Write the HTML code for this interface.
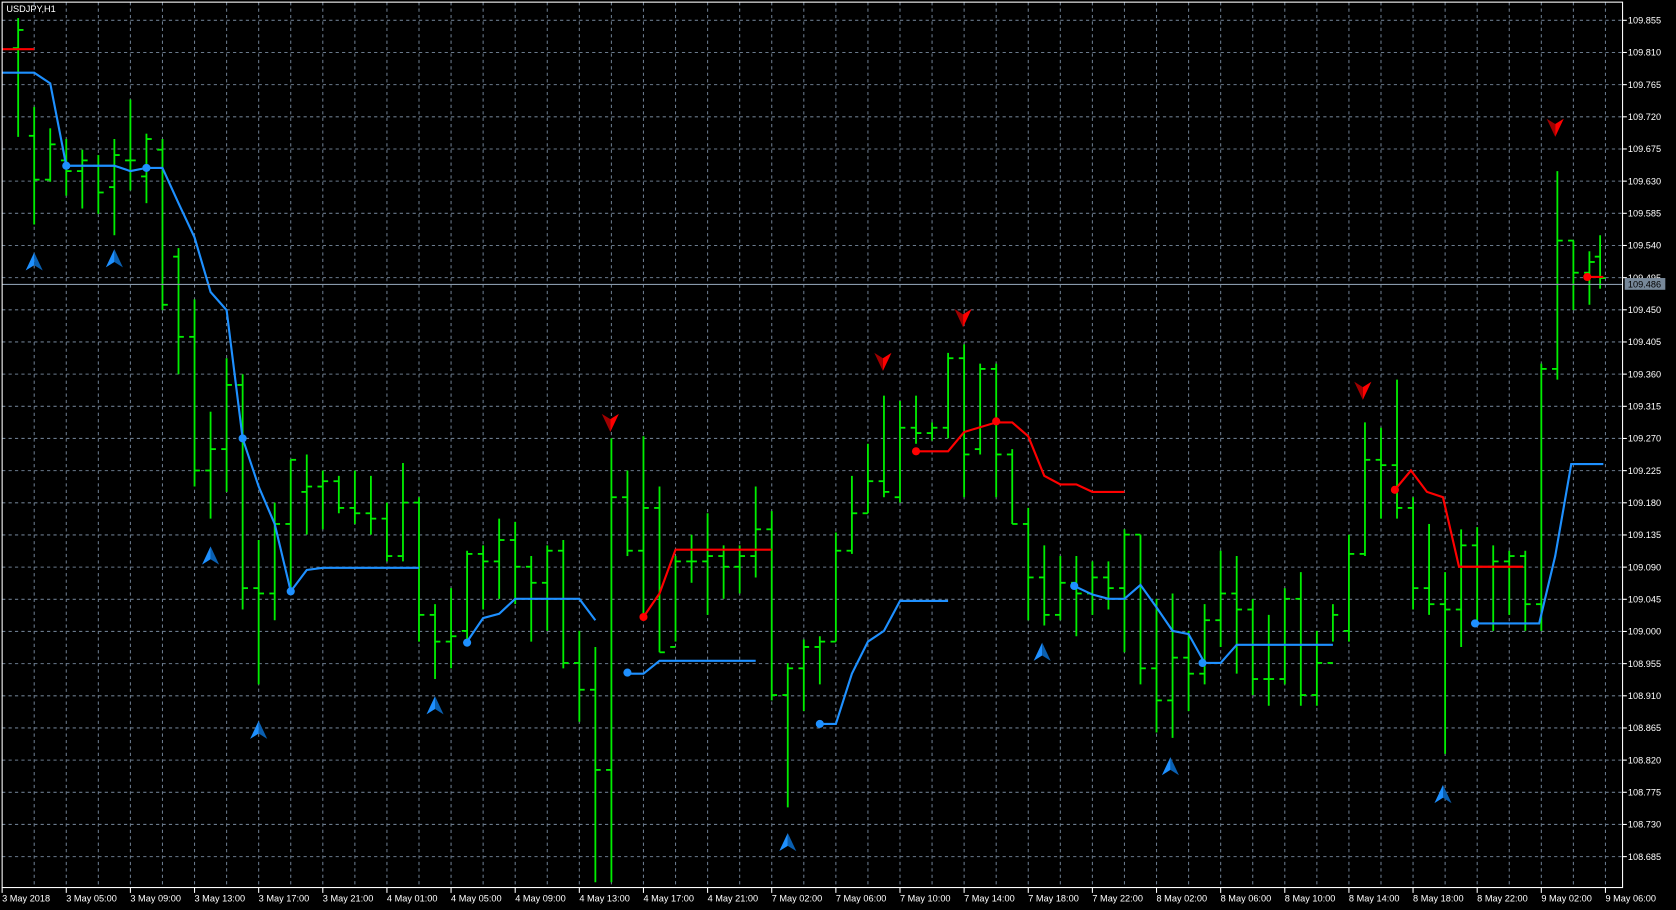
<!DOCTYPE html>
<html><head><meta charset="utf-8"><style>
html,body{margin:0;padding:0;background:#000;overflow:hidden}
svg{display:block}
text{font-family:"Liberation Sans","DejaVu Sans",sans-serif;font-size:8.6px;fill:#fff}
</style></head><body>
<svg id="s" width="1676" height="910" viewBox="0 0 1568 851" preserveAspectRatio="none" xmlns="http://www.w3.org/2000/svg">
<rect width="1568" height="851" fill="#000"/>
<g id="g"></g>
</svg>
<script>
var o='';
// grid
for(var k=0;k<27;k++){var y=19+k*30.08;o+='<line x1="2" x2="1518" y1="'+y+'" y2="'+y+'" stroke="#6a7a8c" stroke-width="1" stroke-dasharray="3,3"/>';
var p=(109.855-k*0.045).toFixed(3);o+='<line x1="1518" x2="1522" y1="'+y+'" y2="'+y+'" stroke="#fff"/><text x="1523" y="'+(y+3)+'">'+p+'</text>';}
for(var x=32;x<1518;x+=30){o+='<line x1="'+x+'" x2="'+x+'" y1="2" y2="830" stroke="#6a7a8c" stroke-width="1" stroke-dasharray="3,3"/>';}
var L=["3 May 2018","3 May 05:00","3 May 09:00","3 May 13:00","3 May 17:00","3 May 21:00","4 May 01:00","4 May 05:00","4 May 09:00","4 May 13:00","4 May 17:00","4 May 21:00","7 May 02:00","7 May 06:00","7 May 10:00","7 May 14:00","7 May 18:00","7 May 22:00","8 May 02:00","8 May 06:00","8 May 10:00","8 May 14:00","8 May 18:00","8 May 22:00","9 May 02:00","9 May 06:00"];
for(var i=0;i<L.length;i++){var x=2+60*i;o+='<line x1="'+x+'" x2="'+x+'" y1="830" y2="835" stroke="#fff"/><text x="'+x+'" y="843">'+L[i]+'</text>';}
// bars x,H,L,O,C
var B=[[17,17,128,45,28],[32,100,210,127,168],[47,120,170,168,135],[62,130,183,150,160],[77,140,195,160,150],[92,145,200,155,180],[107,130,220,175,145],[122,93,178,150,150],[137,125,190,165,130],[152,130,290,140,285],[167,232,350,240,315],[182,280,455,315,440],[197,385,485,440,420],[212,335,460,420,360],[227,350,570,360,550],[242,505,640,550,555],[257,470,580,555,490],[272,430,555,490,430],[287,425,500,460,455],[302,440,495,455,450],[317,445,480,450,475],[332,440,490,475,480],[347,445,500,480,485],[362,470,525,485,520],[377,433,525,520,470],[392,465,600,470,575],[407,565,635,575,600],[422,550,625,600,595],[437,515,600,590,518],[452,510,570,518,525],[467,485,560,525,505],[482,488,565,505,530],[497,520,600,530,545],[512,510,590,545,515],[527,505,625,515,620],[542,590,675,620,645],[557,605,825,645,720],[572,410,825,720,465],[587,440,520,465,515],[602,408,575,515,475],[617,455,610,475,610],[632,520,600,605,525],[647,500,545,525,525],[662,480,575,525,520],[677,510,560,520,530],[692,510,555,530,520],[707,455,540,520,495],[722,478,655,495,650],[737,620,755,650,625],[752,598,665,625,605],[767,595,640,605,600],[782,498,600,600,515],[797,445,518,515,480],[812,415,480,480,450],[827,370,465,450,460],[842,375,470,465,400],[857,370,415,400,405],[872,395,412,405,400],[887,330,410,400,335],[902,322,465,335,425],[917,340,425,420,345],[932,340,465,345,425],[947,420,490,425,490],[962,475,580,490,540],[977,510,585,540,575],[992,520,580,575,545],[1007,520,595,545,555],[1022,525,575,555,540],[1037,525,570,540,550],[1052,495,610,550,500],[1067,500,640,500,625],[1082,560,685,625,655],[1097,555,690,655,615],[1112,590,665,615,630],[1127,565,640,630,580],[1142,515,605,580,555],[1157,520,630,555,570],[1172,560,650,570,635],[1187,575,660,635,635],[1202,550,640,635,560],[1217,535,660,560,650],[1232,590,660,650,620],[1247,565,600,620,575],[1262,500,600,590,518],[1277,395,520,518,430],[1292,400,485,430,435],[1307,355,485,435,475],[1322,465,570,475,550],[1337,490,575,550,565],[1352,535,705,565,570],[1367,495,605,570,510],[1382,493,580,510,530],[1397,510,590,530,525],[1412,515,575,525,520],[1427,515,590,520,565],[1442,340,590,565,345],[1457,160,355,345,225],[1472,225,290,225,255],[1487,235,285,255,245],[1497,220,270,240,260]];
B.forEach(function(b){o+='<g stroke="#00ee00" stroke-width="1.7"><line x1="'+b[0]+'" x2="'+b[0]+'" y1="'+b[1]+'" y2="'+b[2]+'"/><line x1="'+(b[0]-5)+'" x2="'+b[0]+'" y1="'+b[3]+'" y2="'+b[3]+'"/><line x1="'+b[0]+'" x2="'+(b[0]+5)+'" y1="'+b[4]+'" y2="'+b[4]+'"/></g>';});
function pl(pts,c){o+='<polyline fill="none" stroke="'+c+'" stroke-width="2" points="'+pts+'"/>';}
var BL="#1e90ff",RD="#ff0000";
pl("2,68 32,68 47,78 62,155 107,155 122,160 137,157 152,157 167,190 182,222 197,273 212,290 227,410 242,455 257,490 272,553 287,533 302,531 392,531",BL);
pl("437,600 452,578 467,574 482,560 542,560 557,580",BL);
pl("587,630 602,630 617,618 707,618",BL);
pl("767,677 782,677 797,630 812,600 827,590 842,562 887,562",BL);
pl("1005,548 1022,556 1037,560 1052,560 1067,547 1082,568 1097,590 1112,593 1127,620 1142,620 1157,603 1247,603",BL);
pl("1380,583 1440,583 1455,520 1470,434 1500,434",BL);
pl("2,46 32,46",RD);
pl("602,577 617,555 632,514 722,514",RD);
pl("857,422 887,422 902,404 932,395 947,395 962,408 977,445 992,453 1007,453 1022,460 1052,460",RD);
pl("1305,458 1320,440 1335,460 1350,465 1365,530 1425,530",RD);
pl("1485,259 1500,259",RD);
[[62,155],[137,157],[227,410],[272,553],[437,601],[587,629],[767,677],[1005,548],[1125,620],[1380,583]].forEach(function(d){o+='<circle cx="'+d[0]+'" cy="'+d[1]+'" r="3.8" fill="'+BL+'"/>';});
[[602,577],[857,422],[932,394],[1305,458],[1485,259]].forEach(function(d){o+='<circle cx="'+d[0]+'" cy="'+d[1]+'" r="3.8" fill="'+RD+'"/>';});
[[32,245],[107,242],[197,520],[242,683],[407,660],[737,788],[975,610],[1095,717],[1350,743]].forEach(function(a){var x=a[0],y=a[1];o+='<polygon points="'+x+','+(y-9)+' '+(x+8)+','+(y+8)+' '+x+','+(y+3)+'" fill="#0a5fb0"/><polygon points="'+x+','+(y-9)+' '+(x-8)+','+(y+8)+' '+x+','+(y+3)+'" fill="'+BL+'"/>';});
[[571,395],[826,338],[901,297],[1275,365],[1455,119]].forEach(function(a){var x=a[0],y=a[1];o+='<polygon points="'+x+','+(y+9)+' '+(x-8)+','+(y-8)+' '+x+','+(y-3)+'" fill="#a00000"/><polygon points="'+x+','+(y+9)+' '+(x+8)+','+(y-8)+' '+x+','+(y-3)+'" fill="'+RD+'"/>';});
// current price
o+='<line x1="2" x2="1518" y1="266" y2="266" stroke="#8899aa" stroke-width="1"/><rect x="1520" y="260" width="38" height="11" fill="#778899"/><text x="1523" y="269" style="fill:#000">109.486</text>';
// border
o+='<rect x="2" y="2" width="1516" height="828" fill="none" stroke="#fff" stroke-width="1"/>';
o+='<text x="6" y="11">USDJPY,H1</text>';
document.getElementById('g').innerHTML=o;
</script>
</body></html>
